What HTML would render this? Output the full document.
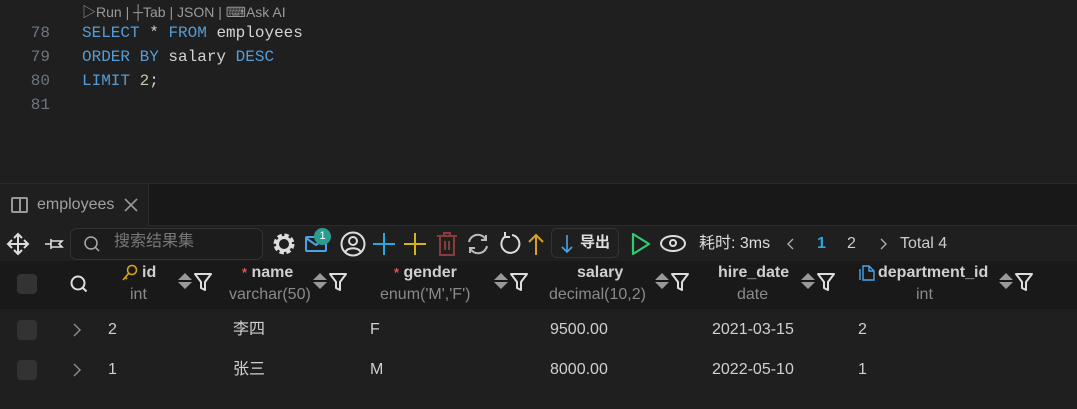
<!DOCTYPE html><html><head><meta charset="utf-8"><style>
*{margin:0;padding:0;box-sizing:border-box}
body{width:1077px;height:409px;background:#1f1f1f;font-family:"Liberation Sans","Noto Sans CJK SC",sans-serif;color:#ccc;position:relative;overflow:hidden}
.a{position:absolute;white-space:nowrap;line-height:20px}
svg.a{overflow:visible}
.mono{font-family:"Liberation Mono",monospace;font-size:16px}
.ln{color:#6e7681;width:50px;text-align:right}
.kw{color:#569cd6}.tx{color:#d4d4d4}.nm{color:#b5cea8}
.hd{font-weight:bold;color:#cfcfcf;font-size:16px}
.ty{color:#8a8a8a;font-size:16px}
.cb{position:absolute;width:20px;height:20px;border-radius:4px;background:#333}
.cell{font-size:16px;color:#d0d0d0}
</style></head><body>
<div class="a" style="left:82px;top:2px;font-size:14px;color:#9a9a9a">▷Run | ┼Tab | JSON | ⌨Ask AI</div>
<div class="a mono ln" style="left:0;top:23px">78</div><div class="a mono" style="left:82px;top:23px"><span class="kw">SELECT</span> <span class="tx">*</span> <span class="kw">FROM</span> <span class="tx">employees</span></div>
<div class="a mono ln" style="left:0;top:47px">79</div><div class="a mono" style="left:82px;top:47px"><span class="kw">ORDER BY</span> <span class="tx">salary</span> <span class="kw">DESC</span></div>
<div class="a mono ln" style="left:0;top:71px">80</div><div class="a mono" style="left:82px;top:71px"><span class="kw">LIMIT</span> <span class="nm">2</span><span class="tx">;</span></div>
<div class="a mono ln" style="left:0;top:95px">81</div>
<!-- tab bar -->
<div class="a" style="left:0;top:183px;width:1077px;height:43px;background:#181818;border-top:1px solid #2b2b2b;border-bottom:1px solid #2b2b2b"></div>
<div class="a" style="left:0;top:184px;width:149px;height:42px;background:#1f1f1f;border-right:1px solid #2b2b2b"></div>
<div class="a" style="left:11px;top:197px;width:17px;height:16px;border:2px solid #999;border-radius:2px"></div>
<div class="a" style="left:19px;top:197px;width:2px;height:16px;background:#999"></div>
<div class="a" style="left:37px;top:195px;font-size:16px;color:#a0a0a0">employees</div>
<svg class="a" style="left:124px;top:198px" width="14" height="14"><path d="M1 1L13 13M13 1L1 13" stroke="#999" stroke-width="1.6"/></svg>
<!-- toolbar -->
<svg class="a" style="left:7px;top:233px" width="22" height="22"><path d="M11 1V21M1 11H21M7 5L11 1L15 5M7 17L11 21L15 17M5 7L1 11L5 15M17 7L21 11L17 15" stroke="#ddd" stroke-width="2" fill="none"/></svg>
<svg class="a" style="left:44px;top:236px" width="20" height="16"><path d="M1 8H7M7 3V13M7 5H18L15 8L18 11H7" stroke="#ddd" stroke-width="1.6" fill="none"/></svg>
<div class="a" style="left:70px;top:228px;width:193px;height:32px;border:1px solid #333;border-radius:7px;background:#1c1c1c"></div>
<svg class="a" style="left:84px;top:236px" width="16" height="16"><circle cx="7" cy="7" r="6" stroke="#aaa" stroke-width="1.5" fill="none"/><path d="M11.5 11.5L15 15" stroke="#aaa" stroke-width="1.5"/></svg>
<div class="a" style="left:114px;top:232px;font-size:16px;color:#777">搜索结果集</div>
<svg class="a" style="left:272px;top:232px" width="24" height="24"><circle cx="12" cy="12" r="8" fill="none" stroke="#ddd" stroke-width="5" stroke-dasharray="4 2.3"/><circle cx="12" cy="12" r="6.5" fill="none" stroke="#ddd" stroke-width="3"/></svg>
<div class="a" style="left:305px;top:236px;width:22px;height:16px;border:2px solid #4aa3e8;border-radius:2px"></div>
<svg class="a" style="left:305px;top:236px" width="22" height="16"><path d="M1 2L11 9L21 2" stroke="#4aa3e8" stroke-width="2" fill="none"/></svg>
<div class="a" style="left:314px;top:228px;width:17px;height:17px;border-radius:50%;background:#2a9d8f;font-size:11px;color:#fff;text-align:center;line-height:17px">1</div>
<svg class="a" style="left:340px;top:231px" width="26" height="26"><circle cx="13" cy="13" r="11.5" fill="none" stroke="#ddd" stroke-width="2"/><circle cx="13" cy="10" r="4" fill="none" stroke="#ddd" stroke-width="2"/><path d="M5.5 21C7 16 19 16 20.5 21" stroke="#ddd" stroke-width="2" fill="none"/></svg>
<svg class="a" style="left:373px;top:233px" width="22" height="22"><path d="M11 0V22M0 11H22" stroke="#29a8e0" stroke-width="2"/></svg>
<svg class="a" style="left:404px;top:233px" width="22" height="22"><path d="M11 0V22M0 11H22" stroke="#d6b31b" stroke-width="2"/></svg>
<svg class="a" style="left:436px;top:232px" width="22" height="24"><path d="M1 4H21M8 4V1H14V4M4 4V23H18V4M9 9V18M13 9V18" stroke="#8b3a3a" stroke-width="2" fill="none"/></svg>
<svg class="a" style="left:466px;top:233px" width="24" height="22"><path d="M3 9A9 9 0 0 1 20 7M21 13A9 9 0 0 1 4 15M20 2V7H15M4 20V15H9" stroke="#bbb" stroke-width="2" fill="none"/></svg>
<svg class="a" style="left:498px;top:232px" width="24" height="24"><path d="M8 4A9 9 0 1 0 14 3M7 0V5H12" stroke="#ddd" stroke-width="2" fill="none"/></svg>
<svg class="a" style="left:528px;top:233px" width="16" height="22"><path d="M8 22V2M1 9L8 2L15 9" stroke="#d6a41b" stroke-width="2" fill="none"/></svg>
<div class="a" style="left:551px;top:228px;width:68px;height:30px;border:1px solid #333;border-radius:6px"></div>
<svg class="a" style="left:561px;top:235px" width="12" height="18"><path d="M6 0V17M1 12L6 17L11 12" stroke="#4aa3e8" stroke-width="1.6" fill="none"/></svg>
<div class="a" style="left:580px;top:233px;font-size:15px;color:#ddd;font-weight:bold">导出</div>
<svg class="a" style="left:631px;top:232px" width="20" height="24"><path d="M2 2L18 12L2 22Z" stroke="#2ecc71" stroke-width="2.2" fill="none" stroke-linejoin="round"/></svg>
<div class="a" style="left:660px;top:235px;width:26px;height:17px;border:2px solid #ddd;border-radius:50%"></div>
<div class="a" style="left:669px;top:239px;width:8px;height:8px;border:2px solid #ddd;border-radius:50%"></div>
<div class="a" style="left:699px;top:234px;font-size:16px;color:#ddd">耗时: 3ms</div>
<svg class="a" style="left:787px;top:238px" width="8" height="12"><path d="M6 1L1 6L6 11" stroke="#aaa" stroke-width="1.4" fill="none"/></svg>
<div class="a" style="left:817px;top:234px;font-size:16px;color:#29a8e0;font-weight:bold">1</div>
<div class="a" style="left:847px;top:234px;font-size:16px;color:#ccc">2</div>
<svg class="a" style="left:879px;top:238px" width="8" height="12"><path d="M2 1L7 6L2 11" stroke="#aaa" stroke-width="1.4" fill="none"/></svg>
<div class="a" style="left:900px;top:234px;font-size:16px;color:#ccc">Total 4</div>
<!-- header -->
<div class="a" style="left:0;top:261px;width:1077px;height:48px;background:#191919"></div>
<div class="cb" style="left:17px;top:274px"></div>
<svg class="a" style="left:70px;top:275px" width="18" height="18"><circle cx="8" cy="8" r="6.5" stroke="#ddd" stroke-width="2" fill="none"/><path d="M12.5 12.5L16.5 16.5" stroke="#ddd" stroke-width="2"/></svg>
<svg class="a" style="left:122px;top:264px" width="16" height="18"><circle cx="10" cy="6" r="4.5" stroke="#d6a41b" stroke-width="1.6" fill="none"/><path d="M7 9L1 16M3 13L5 15" stroke="#d6a41b" stroke-width="1.6" fill="none"/></svg>
<div class="a hd" style="left:142px;top:263px">id</div><div class="a ty" style="left:130px;top:285px">int</div>
<div class="a hd" style="left:242px;top:263px"><span style="color:#e05555;font-size:13px">*</span> name</div><div class="a ty" style="left:229px;top:285px">varchar(50)</div>
<div class="a hd" style="left:394px;top:263px"><span style="color:#e05555;font-size:13px">*</span> gender</div><div class="a ty" style="left:380px;top:285px">enum('M','F')</div>
<div class="a hd" style="left:577px;top:263px">salary</div><div class="a ty" style="left:549px;top:285px">decimal(10,2)</div>
<div class="a hd" style="left:718px;top:263px">hire_date</div><div class="a ty" style="left:737px;top:285px">date</div>
<svg class="a" style="left:859px;top:265px" width="16" height="16"><path d="M4 1H10L15 6V15H4ZM10 1V6H15M1 4V15" stroke="#4aa3e8" stroke-width="1.4" fill="none"/></svg>
<div class="a hd" style="left:878px;top:263px">department_id</div><div class="a ty" style="left:916px;top:285px">int</div>
<svg width="0" height="0" style="position:absolute"><defs><g id="sf"><path d="M0 7L7 0L14 7ZM0 9L7 16L14 9Z" fill="#999"/><path d="M17 1H33L27 9V17L23 15V9Z" stroke="#ddd" stroke-width="2" fill="none" stroke-linejoin="round"/></g></defs></svg>
<svg class="a" style="left:178px;top:273px" width="36" height="18"><use href="#sf"/></svg>
<svg class="a" style="left:313px;top:273px" width="36" height="18"><use href="#sf"/></svg>
<svg class="a" style="left:494px;top:273px" width="36" height="18"><use href="#sf"/></svg>
<svg class="a" style="left:655px;top:273px" width="36" height="18"><use href="#sf"/></svg>
<svg class="a" style="left:801px;top:273px" width="36" height="18"><use href="#sf"/></svg>
<svg class="a" style="left:999px;top:273px" width="36" height="18"><use href="#sf"/></svg>
<!-- rows -->
<div class="cb" style="left:17px;top:320px"></div><svg class="a" style="left:73px;top:323px" width="8" height="14"><path d="M1 1L7 7L1 13" stroke="#888" stroke-width="1.5" fill="none"/></svg>
<div class="a cell" style="left:108px;top:320px">2</div><div class="a cell" style="left:233px;top:320px">李四</div><div class="a cell" style="left:370px;top:320px">F</div><div class="a cell" style="left:550px;top:320px">9500.00</div><div class="a cell" style="left:712px;top:320px">2021-03-15</div><div class="a cell" style="left:858px;top:320px">2</div>
<div class="cb" style="left:17px;top:360px"></div><svg class="a" style="left:73px;top:363px" width="8" height="14"><path d="M1 1L7 7L1 13" stroke="#888" stroke-width="1.5" fill="none"/></svg>
<div class="a cell" style="left:108px;top:360px">1</div><div class="a cell" style="left:233px;top:360px">张三</div><div class="a cell" style="left:370px;top:360px">M</div><div class="a cell" style="left:550px;top:360px">8000.00</div><div class="a cell" style="left:712px;top:360px">2022-05-10</div><div class="a cell" style="left:858px;top:360px">1</div>
</body></html>
